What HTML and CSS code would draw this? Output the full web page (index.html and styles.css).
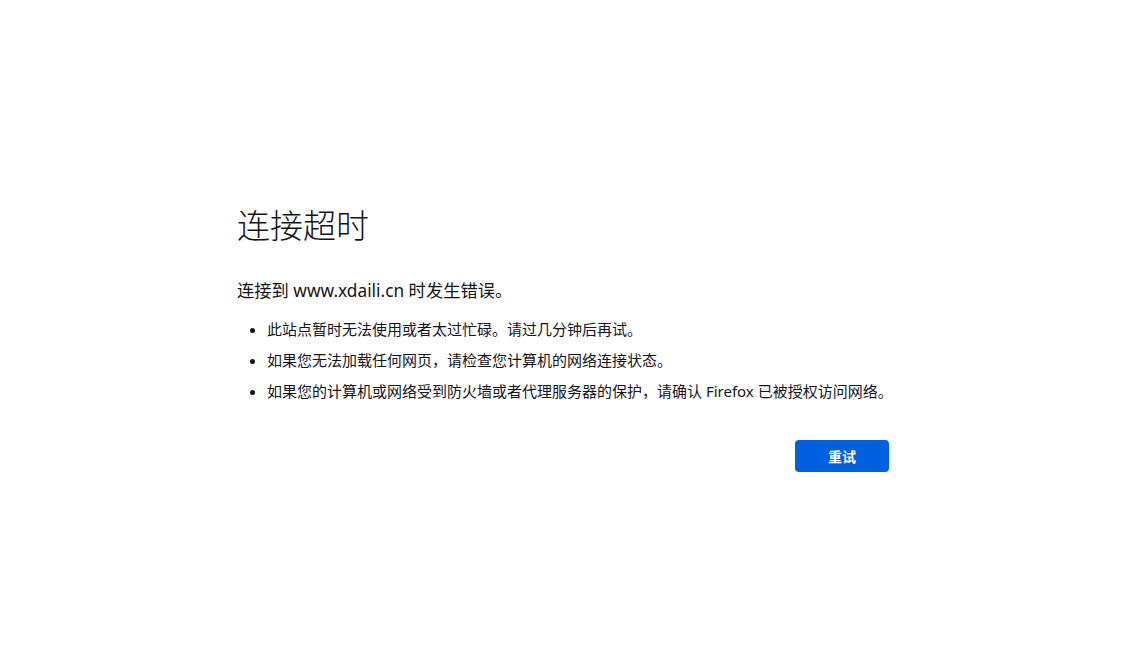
FILE: index.html
```html
<!DOCTYPE html>
<html lang="zh-CN">
<head>
<meta charset="utf-8">
<title>连接超时</title>
<link rel="stylesheet" href="styles.css">
</head>
<body>
<main class="container">
  <h1 class="title">连接超时</h1>
  <p class="intro">连接到 www.xdaili.cn 时发生错误。</p>
  <ul class="tips">
    <li>此站点暂时无法使用或者太过忙碌。请过几分钟后再试。</li>
    <li>如果您无法加载任何网页，请检查您计算机的网络连接状态。</li>
    <li>如果您的计算机或网络受到防火墙或者代理服务器的保护，请确认 Firefox 已被授权访问网络。</li>
  </ul>
  <div class="actions">
    <button class="retry">重试</button>
  </div>
</main>
</body>
</html>
```
FILE: styles.css
```css
html, body {
  margin: 0;
  height: 100%;
  background: #ffffff;
}
body {
  display: flex;
  justify-content: center;
  font-family: "Noto Sans", "Noto Sans CJK SC", sans-serif;
  color: #15141a;
  text-spacing-trim: space-all;
}
.container {
  width: 652px;
  padding-top: 203px;
}
.title {
  margin: 0;
  font-size: 33px;
  font-weight: 300;
  line-height: 46px;
}
.intro {
  margin: 29px 0 0;
  font-size: 17.3px;
  line-height: 26px;
}
.tips {
  margin: 14px 0 0;
  padding-left: 30px;
  font-size: 15px;
  line-height: 22px;
}
.tips li {
  margin-bottom: 9px;
  white-space: nowrap;
}
.actions {
  display: flex;
  justify-content: flex-end;
  margin-top: 38px;
}
.retry {
  width: 94px;
  height: 32px;
  border: none;
  border-radius: 4px;
  background: #0061e0;
  color: #ffffff;
  font-family: "Noto Sans CJK SC", sans-serif;
  font-size: 14px;
  font-weight: 700;
}
```
